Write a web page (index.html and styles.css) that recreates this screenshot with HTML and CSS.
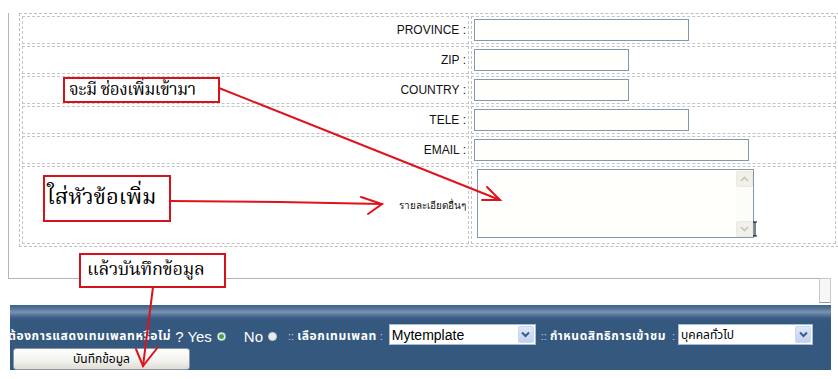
FILE: index.html
```html
<!DOCTYPE html>
<html lang="th">
<head>
    <meta charset="UTF-8">
    <title>ข้อมูลสมาชิก</title>
    <link rel="stylesheet" href="styles.css">
</head>
<body>
<div class="page">
    <div class="panel">
        <table class="form">
            <tr>
                <td class="lbl">PROVINCE :</td>
                <td class="val"><input class="txt w-long" type="text"></td>
            </tr>
            <tr>
                <td class="lbl">ZIP :</td>
                <td class="val"><input class="txt w-short" type="text"></td>
            </tr>
            <tr>
                <td class="lbl">COUNTRY :</td>
                <td class="val"><input class="txt w-short" type="text"></td>
            </tr>
            <tr>
                <td class="lbl">TELE :</td>
                <td class="val"><input class="txt w-long" type="text"></td>
            </tr>
            <tr>
                <td class="lbl">EMAIL :</td>
                <td class="val"><input class="txt w-wide" type="text"></td>
            </tr>
            <tr>
                <td class="lbl lbl-th">รายละเอียดอื่นๆ</td>
                <td class="val memo-cell">
                    <div class="memo">
                        <textarea></textarea>
                        <div class="vscroll">
                            <span class="sbtn"><svg width="9" height="6" viewBox="0 0 9 6"><path d="M1 5 L4.5 1.5 L8 5" fill="none" stroke="#c9c6b6" stroke-width="1.6"/></svg></span>
                            <span class="sbtn"><svg width="9" height="6" viewBox="0 0 9 6"><path d="M1 1 L4.5 4.5 L8 1" fill="none" stroke="#c9c6b6" stroke-width="1.6"/></svg></span>
                        </div>
                    </div>
                </td>
            </tr>
        </table>
    </div>

    <div class="gap-row"><span class="stub"></span></div>

    <div class="bar">
        <div class="bar-line">
            <span class="th-b">ต้องการแสดงเทมเพลทหรือไม่</span>
            <span class="big q">? Yes</span>
            <span class="radio on"></span>
            <span class="big no">No</span>
            <span class="radio"></span>
            <span class="sep dbl s1">::</span>
            <span class="th-b">เลือกเทมเพลท</span>
            <span class="sep s2">:</span>
            <div class="combo c-tpl">
                <span class="combo-text">Mytemplate</span>
                <span class="drop"><svg width="9" height="7" viewBox="0 0 9 7"><path d="M1 1.5 L4.5 5 L8 1.5" fill="none" stroke="#3b5a8c" stroke-width="2"/></svg></span>
            </div>
            <span class="sep dbl s3">::</span>
            <span class="th-b">กำหนดสิทธิการเข้าชม</span>
            <span class="sep s4">:</span>
            <div class="combo c-perm">
                <span class="combo-text th">บุคคลทั่วไป</span>
                <span class="drop"><svg width="9" height="7" viewBox="0 0 9 7"><path d="M1 1.5 L4.5 5 L8 1.5" fill="none" stroke="#3b5a8c" stroke-width="2"/></svg></span>
            </div>
        </div>
        <button class="save">บันทึกข้อมูล</button>
    </div>

    <!-- ลูกศรคำอธิบาย -->
    <svg class="marks" width="838" height="379" viewBox="0 0 838 379">
        <g stroke="#e0131b" stroke-width="2" fill="none" stroke-linecap="round">
            <path d="M219 88 L500 200"/>
            <path d="M487 187 L500 200 L482 200"/>
            <path d="M170 201 L280 202 L382 204"/>
            <path d="M361 197 L382 204 L368 214"/>
            <path d="M153 287 L143 366"/>
            <path d="M136 349 L143 366 L158 347"/>
        </g>
        <path d="M753 222 h4 M755 222 v14 M753 236 h4" stroke="#000" stroke-width="1" fill="none"/>
    </svg>
    <div class="note n1">จะมี ช่องเพิ่มเข้ามา</div>
    <div class="note n2">ใส่หัวข้อเพิ่ม</div>
    <div class="note n3">แล้วบันทึกข้อมูล</div>
</div>
</body>
</html>
```

FILE: styles.css
```css
* {
    margin: 0;
    padding: 0;
    box-sizing: border-box;
}

html, body {
    width: 838px;
    height: 379px;
    overflow: hidden;
    background: #ffffff;
}

body {
    font-family: "Liberation Sans", "Noto Sans", sans-serif;
    font-size: 12px;
    color: #000;
}

.page {
    position: relative;
    width: 838px;
    height: 379px;
    overflow: hidden;
}

/* กล่องฟอร์ม */
.panel {
    margin: 13px 0 0 8px;
    width: 823px;
    height: 266px;
    border-left: 1px solid #b4b4b4;
    border-bottom: 1px solid #b4b4b4;
}

.form {
    width: 820px;
    margin-left: 10px;
    border: 1px dashed #bdbdbd;
    border-spacing: 2px;
}

.form td {
    box-sizing: content-box;
    border: 1px dashed #c4c4c4;
    padding: 2px;
    height: 22px;
}

.lbl {
    width: 441px;
    text-align: right;
    vertical-align: middle;
    white-space: nowrap;
    color: #111;
}

.lbl-th {
    font-size: 10px;
}

.val {
    width: 359px;
    vertical-align: top;
}

.txt {
    display: block;
    height: 22px;
    border: 1px solid #8298ae;
    background: #fffffb;
    outline: none;
}

.w-long { width: 215px; }
.w-short { width: 155px; }
.w-wide { width: 275px; }

.memo-cell {
    height: 72px !important;
}

.memo {
    display: flex;
    margin-left: 3px;
    width: 277px;
    height: 69px;
    border: 1px solid #8298ae;
    background: #fffffb;
}

.memo textarea {
    flex: 1;
    border: none;
    resize: none;
    outline: none;
    background: transparent;
}

.vscroll {
    width: 17px;
    display: flex;
    flex-direction: column;
    justify-content: space-between;
    background: #fcfcf9;
    padding-top: 1px;
}

.sbtn {
    height: 16px;
    display: flex;
    align-items: center;
    justify-content: center;
    background: #f1f0ea;
    border: 1px solid #eceae0;
    border-radius: 2px;
}

.gap-row {
    height: 26px;
    display: flex;
    justify-content: flex-end;
    width: 831px;
}

.stub {
    width: 12px;
    height: 25px;
    margin-top: -1px;
    border: 1px solid #c8c8c8;
    border-bottom-color: #9a9a9a;
    background: #f7f7f7;
}

/* แถบด้านล่าง */
.bar {
    margin-left: 10px;
    width: 821px;
    height: 65px;
    padding-top: 19px;
    overflow: hidden;
    color: #fff;
    background: linear-gradient(#3f6086 0, #56769b 4px, #7b93b2 7px, #56769b 10px, #3a5c83 13px, #35587f 16px, #35587f 100%);
}

.bar-line {
    display: flex;
    align-items: center;
    height: 21px;
    margin-left: -2px;
    white-space: nowrap;
}

.bar-line > * {
    flex-shrink: 0;
}

.th-b {
    font-family: "Noto Sans Thai", "Noto Sans", "DejaVu Sans", sans-serif;
    font-size: 12px;
    font-weight: bold;
    letter-spacing: 0.6px;
    padding-top: 3px;
}

.big {
    font-size: 15px;
    padding-top: 3px;
    margin-right: 5px;
}

.big.q {
    margin-left: 4px;
}

.big.no {
    margin-left: 18px;
}

.radio {
    width: 9px;
    height: 9px;
    margin-top: 3px;
    border-radius: 50%;
    background: #e9ece8;
    border: 1px solid #c9d0d8;
}

.radio.on {
    background: radial-gradient(circle, #3f9a3a 0, #4ea648 2px, #e9eee7 3px);
}

.sep {
    color: #c8d3e0;
    font-size: 11px;
    padding-top: 3px;
}

.s1 { margin: 0 3px 0 11px; }
.s2 { margin: 0 0 0 3px; }
.s3 { margin: 0 3px 0 5px; }
.s4 { margin: 0 0 0 6px; }

.combo {
    display: flex;
    align-items: center;
    height: 21px;
    background: #fff;
    border: 1px solid #a9bcd3;
    color: #000;
}

.c-tpl { width: 147px; margin-left: 6px; }
.c-perm { width: 135px; margin-left: 3px; }

.combo-text {
    flex: 1;
    padding-left: 2px;
    font-size: 14px;
}

.combo-text.th {
    font-family: "Noto Sans Thai", "Noto Sans", sans-serif;
    font-size: 12px;
}

.drop {
    width: 16px;
    height: 17px;
    margin-right: 1px;
    display: flex;
    align-items: center;
    justify-content: center;
    background: linear-gradient(#dfe8f9, #c2d2f0);
    border: 1px solid #c9d7ef;
    border-radius: 2px;
}

.save {
    display: block;
    margin: 3px 0 0 3px;
    width: 177px;
    height: 22px;
    border: 1px solid #8a97a6;
    border-radius: 3px;
    background: linear-gradient(#ffffff, #f1f1ee 60%, #dedcd4);
    font-family: "Noto Sans Thai", "Noto Sans", sans-serif;
    font-size: 12px;
    color: #000;
}

/* คำอธิบายสีแดง */
.marks {
    position: absolute;
    top: 0;
    left: 0;
    pointer-events: none;
}

.note {
    position: absolute;
    border: 2px solid #d4121c;
    background: #fff;
    color: #000;
    font-family: "Noto Serif Thai", "Noto Sans Thai", serif;
    white-space: nowrap;
    display: flex;
    align-items: center;
    overflow: hidden;
}

.n1 {
    left: 63px;
    top: 77px;
    width: 157px;
    height: 26px;
    padding-left: 4px;
    font-size: 17px;
    letter-spacing: -0.5px;
}

.n2 {
    left: 43px;
    top: 175px;
    width: 128px;
    height: 47px;
    padding-left: 2px;
    font-size: 22px;
}

.n3 {
    left: 79px;
    top: 253px;
    width: 147px;
    height: 35px;
    padding-left: 6px;
    font-size: 18px;
    letter-spacing: -0.3px;
}
```
